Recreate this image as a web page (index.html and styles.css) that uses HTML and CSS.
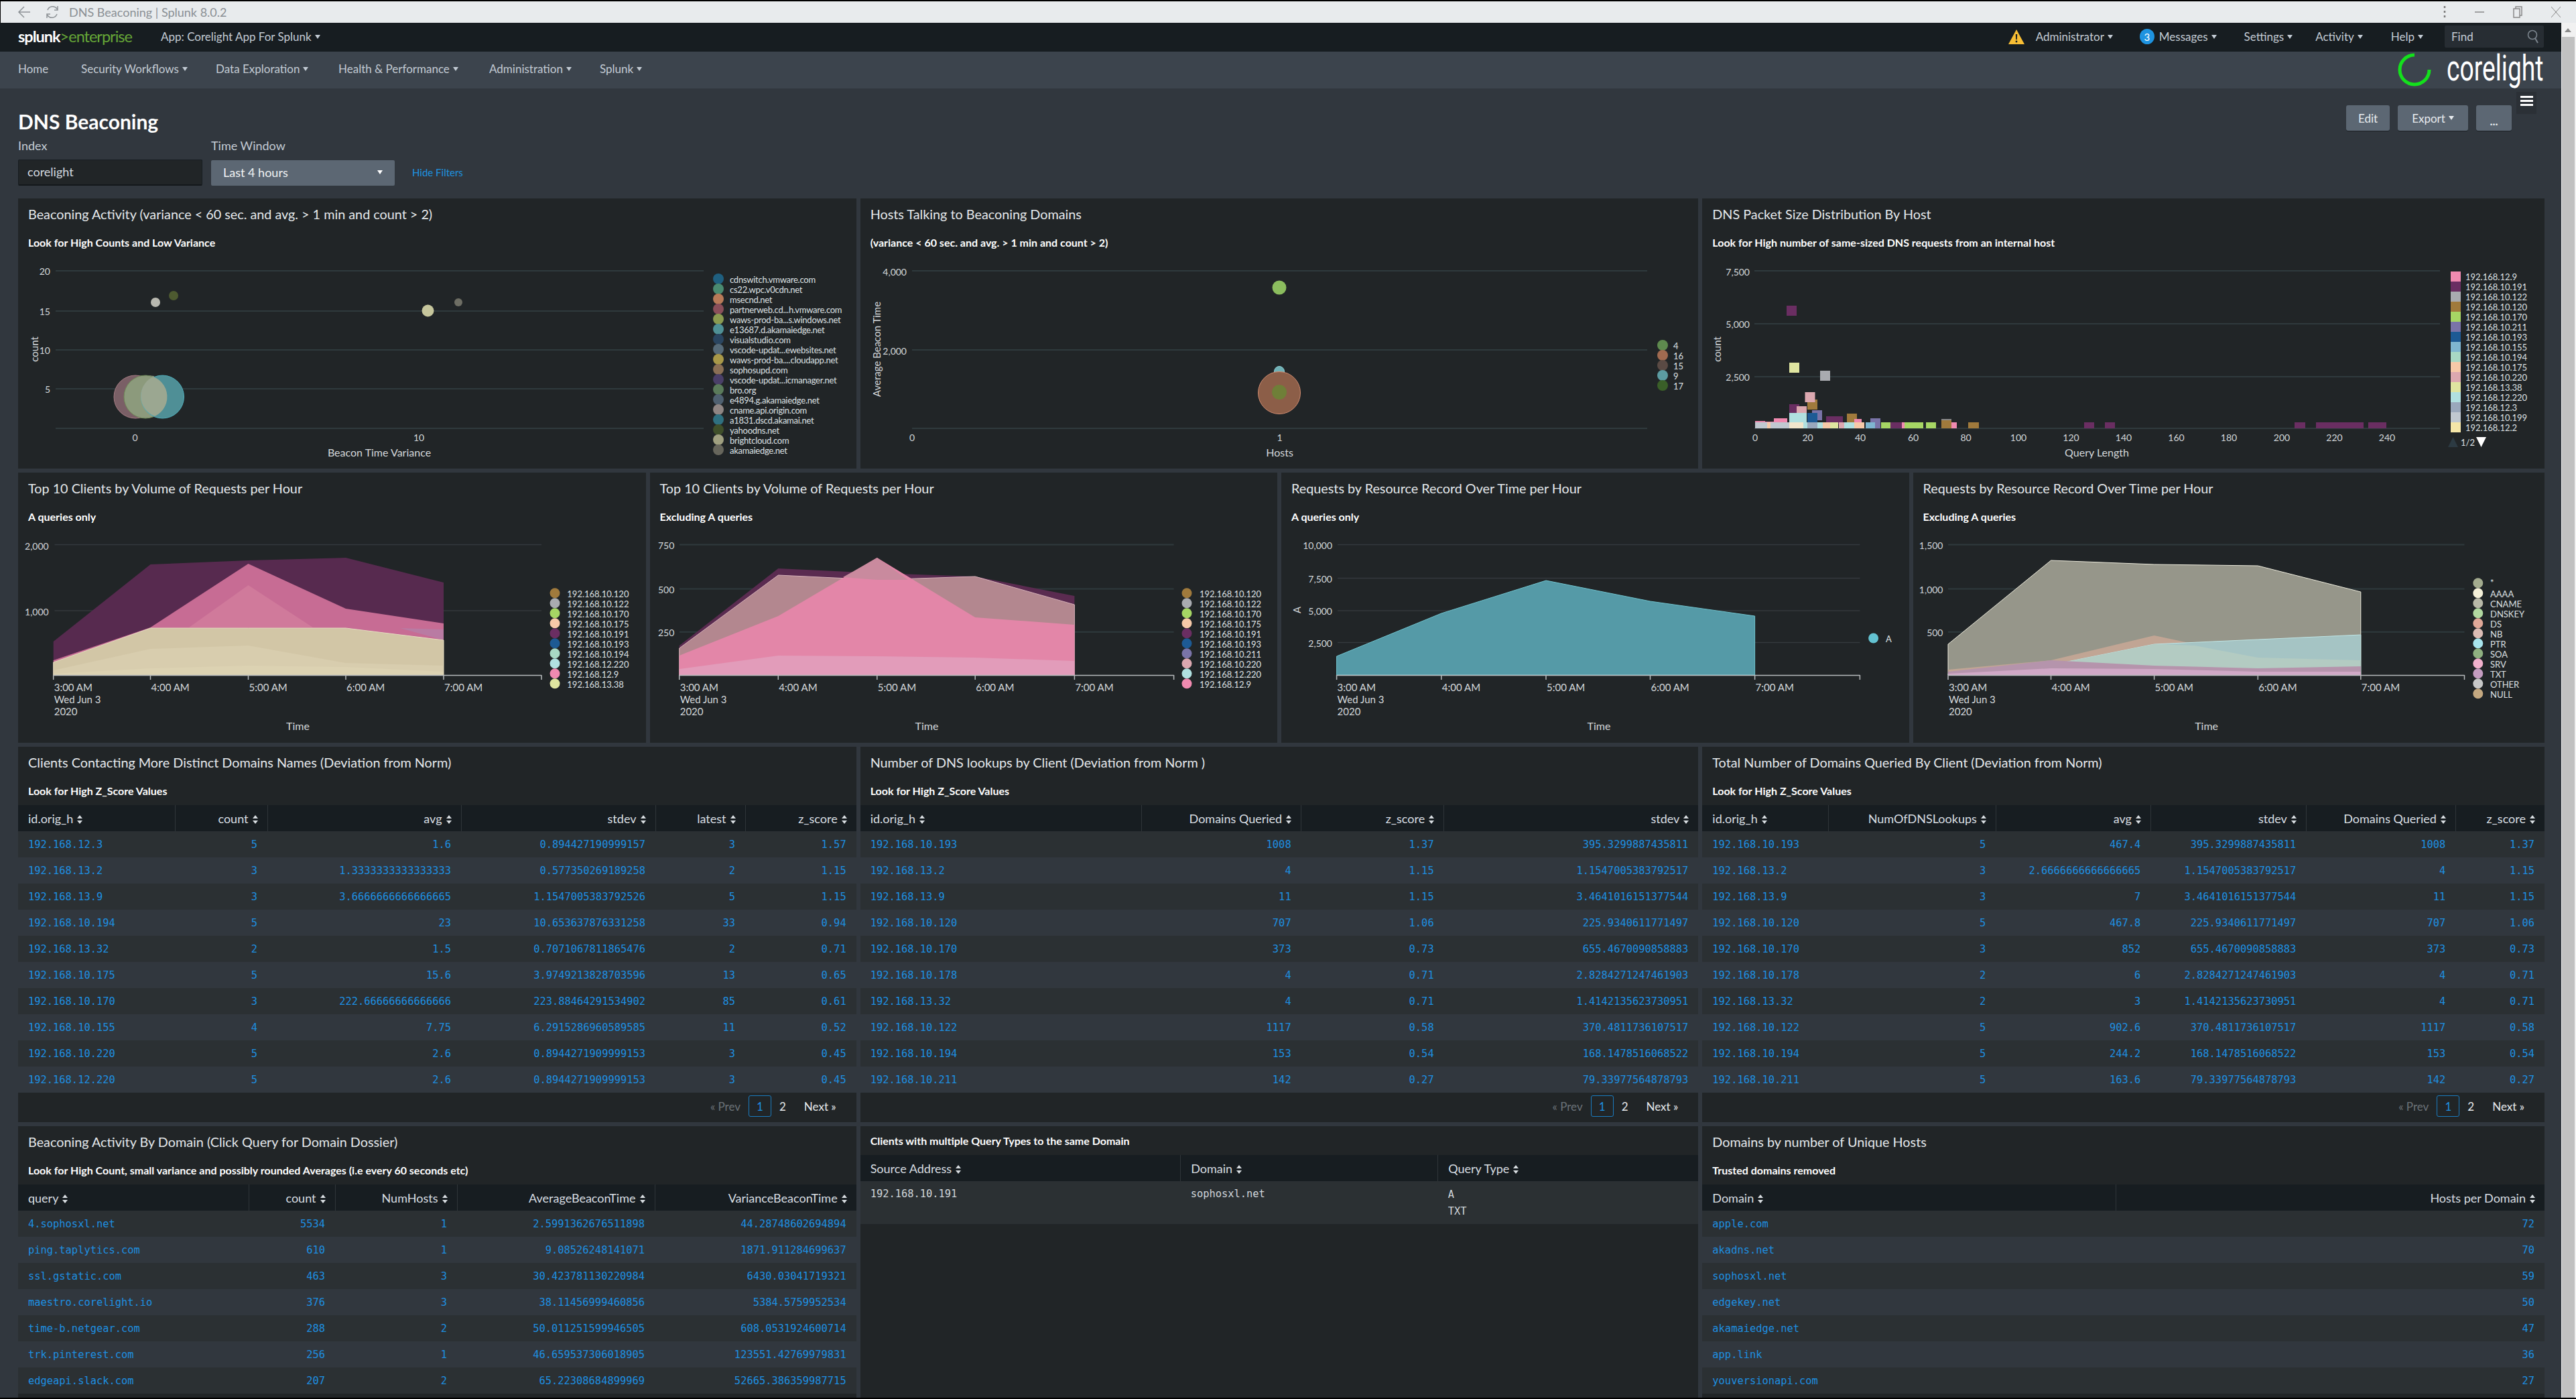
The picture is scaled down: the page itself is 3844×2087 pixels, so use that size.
FILE: index.html
```html
<!DOCTYPE html>
<html lang="en">
<head>
<meta charset="utf-8">
<title>DNS Beaconing | Splunk 8.0.2</title>
<link rel="stylesheet" href="styles.css">
</head>
<body>
<div class="chrome">
  <svg class="chrome-ic" width="24" height="24" viewBox="0 0 24 24"><path d="M20 12H4M11 4l-8 8 8 8" fill="none" stroke="#8d9296" stroke-width="1.5"/></svg>
  <svg class="chrome-ic" width="24" height="24" viewBox="0 0 24 24"><path d="M5 9a8 8 0 0 1 14-2l1 2M19 15a8 8 0 0 1-14 2l-1-2M20 3v6h-5M4 21v-6h5" fill="none" stroke="#8d9296" stroke-width="1.5"/></svg>
  <span class="chrome-title">DNS Beaconing | Splunk 8.0.2</span>
  <div class="chrome-right">
    <svg width="4" height="18" viewBox="0 0 4 18"><path d="M2 0v3M2 7v3M2 14v3" stroke="#777" stroke-width="2.5"/></svg>
    <svg width="14" height="14" viewBox="0 0 14 14"><path d="M0 7h14" stroke="#888" stroke-width="1.5"/></svg>
    <svg width="14" height="18" viewBox="0 0 14 18"><path d="M1 4h9v13H1zM4 4V1h9v13h-3" fill="none" stroke="#888" stroke-width="1.5"/></svg>
    <svg width="14" height="18" viewBox="0 0 14 18"><path d="M0 1l14 16M14 1L0 17" fill="none" stroke="#888" stroke-width="1"/></svg>
  </div>
</div>
<div class="shell">
<div class="main">
  <header class="topbar">
    <div class="brand"><span class="brand-a">splunk</span><span class="brand-b">&gt;enterprise</span></div>
    <span class="top-item caret app-menu">App: Corelight App For Splunk</span>
    <div class="top-right">
      <svg class="warn" width="24" height="22" viewBox="0 0 24 22"><path d="M12 0l12 22H0z" fill="#f8be34"/><path d="M10.800 7h2.400l-.4 8h-1.600z" fill="#171d21"/><circle cx="12" cy="18" r="1.400" fill="#171d21"/></svg>
      <span class="top-item caret admin">Administrator</span>
      <span class="badge">3</span>
      <span class="top-item caret msgs">Messages</span>
      <span class="top-item caret settings">Settings</span>
      <span class="top-item caret activity">Activity</span>
      <span class="top-item caret help">Help</span>
      <div class="find"><span>Find</span>
        <svg width="18" height="22" viewBox="0 0 18 22"><circle cx="8" cy="8" r="6.500" fill="none" stroke="#7b848d" stroke-width="1.600"/><path d="M12 13l4 7" stroke="#7b848d" stroke-width="2"/></svg>
      </div>
    </div>
  </header>
  <nav class="appbar">
    <span class="nav-item home">Home</span>
    <span class="nav-item caret sec">Security Workflows</span>
    <span class="nav-item caret data">Data Exploration</span>
    <span class="nav-item caret perf">Health &amp; Performance</span>
    <span class="nav-item caret adm">Administration</span>
    <span class="nav-item caret spl">Splunk</span>
    <svg class="logo" width="218" height="60" viewBox="0 0 218 60">
      <path d="M25 5A22 22 0 1 0 47 27" fill="none" stroke="#14e01c" stroke-width="5"/>
      <text class="logo-text" transform="translate(73 43) scale(.69 1)">corelight</text>
    </svg>
  </nav>
  <div class="pagehead">
    <div class="pagehead-left">
      <h1>DNS Beaconing</h1>
      <div class="filters">
        <div class="field"><label>Index</label><div class="input">corelight</div></div>
        <div class="field"><label>Time Window</label><div class="select"><span>Last 4 hours</span><i class="tri"></i></div></div>
        <a class="hide">Hide Filters</a>
      </div>
    </div>
    <div class="btns">
      <span class="btn edit">Edit</span>
      <span class="btn export caret">Export</span>
      <span class="btn more">...</span>
    </div>
    <div class="burger"><i></i><i></i><i></i></div>
  </div>

  <div class="row r3 h403">
    <section class="panel">
      <h2>Beaconing Activity (variance &lt; 60 sec. and avg. &gt; 1 min and count &gt; 2)</h2>
      <h3>Look for High Counts and Low Variance</h3>
      <svg class="chart">
        <g class="grid"><path d="M56 22H1023M56 82H1023M56 140H1023M56 198H1023M56 257H1023"/></g>
        <g class="yl"><text x="48" y="22">20</text><text x="48" y="82">15</text><text x="48" y="140">10</text><text x="48" y="198">5</text></g>
        <g class="xl"><text x="174.500" y="270">0</text><text x="598" y="270">10</text><text x="539" y="292">Beacon Time Variance</text></g>
        <text class="rot" transform="translate(24 139) rotate(-90)">count</text>
        <circle cx="175" cy="210" r="32" fill="#7a5f66" stroke="#a87f85"/>
        <circle cx="190" cy="210" r="32" fill="#8c9a7c" stroke="#6f8a58"/>
        <circle cx="215.500" cy="210" r="32" fill="#4f8f96" stroke="#50b0bd"/>
        <path d="M190 178a32 32 0 0 1 14 61a32 32 0 0 1 0-60" fill="#9ba791"/>
        <circle cx="205" cy="69" r="7" fill="#b9b9b0"/>
        <circle cx="232" cy="59" r="7" fill="#4d5a30"/>
        <circle cx="611.500" cy="81.500" r="9" fill="#c6c69c"/>
        <circle cx="657" cy="69" r="6" fill="#6e6e64"/>
        <g class="lg tight">
          <circle cx="1045" cy="34" r="8" fill="#1f5f7f"/><text x="1062" y="35">cdnswitch.vmware.com</text>
          <circle cx="1045" cy="49" r="8" fill="#4a8a70"/><text x="1062" y="50">cs22.wpc.v0cdn.net</text>
          <circle cx="1045" cy="64" r="8" fill="#b87a58"/><text x="1062" y="65">msecnd.net</text>
          <circle cx="1045" cy="79" r="8" fill="#8a4f5a"/><text x="1062" y="80">partnerweb.cd...h.vmware.com</text>
          <circle cx="1045" cy="94" r="8" fill="#8a9a50"/><text x="1062" y="95">waws-prod-ba...s.windows.net</text>
          <circle cx="1045" cy="109" r="8" fill="#4f9095"/><text x="1062" y="110">e13687.d.akamaiedge.net</text>
          <circle cx="1045" cy="124" r="8" fill="#2a4560"/><text x="1062" y="125">visualstudio.com</text>
          <circle cx="1045" cy="139" r="8" fill="#566a78"/><text x="1062" y="140">vscode-updat...ewebsites.net</text>
          <circle cx="1045" cy="154" r="8" fill="#a89848"/><text x="1062" y="155">waws-prod-ba....cloudapp.net</text>
          <circle cx="1045" cy="169" r="8" fill="#8a6f55"/><text x="1062" y="170">sophosupd.com</text>
          <circle cx="1045" cy="184" r="8" fill="#4a3f68"/><text x="1062" y="185">vscode-updat...icmanager.net</text>
          <circle cx="1045" cy="199" r="8" fill="#5a7a5a"/><text x="1062" y="200">bro.org</text>
          <circle cx="1045" cy="214" r="8" fill="#4f6070"/><text x="1062" y="215">e4894.g.akamaiedge.net</text>
          <circle cx="1045" cy="229" r="8" fill="#8f8583"/><text x="1062" y="230">cname.api.origin.com</text>
          <circle cx="1045" cy="244" r="8" fill="#2f7080"/><text x="1062" y="245">a1831.dscd.akamai.net</text>
          <circle cx="1045" cy="259" r="8" fill="#3f4f2a"/><text x="1062" y="260">yahoodns.net</text>
          <circle cx="1045" cy="274" r="8" fill="#a0a080"/><text x="1062" y="275">brightcloud.com</text>
          <circle cx="1045" cy="289" r="8" fill="#67665c"/><text x="1062" y="290">akamaiedge.net</text>
        </g>
      </svg>
    </section>
    <section class="panel">
      <h2>Hosts Talking to Beaconing Domains</h2>
      <h3>(variance &lt; 60 sec. and avg. &gt; 1 min and count &gt; 2)</h3>
      <svg class="chart">
        <g class="grid"><path d="M77 22H1174M77 140H1174M77 257H1174"/></g>
        <g class="yl"><text x="69" y="23">4,000</text><text x="69" y="141">2,000</text></g>
        <g class="xl"><text x="77" y="270">0</text><text x="625.500" y="270">1</text><text x="625.500" y="292">Hosts</text></g>
        <text class="rot" transform="translate(23.500 139) rotate(-90)">Average Beacon Time</text>
        <circle cx="625" cy="47" r="10.500" fill="#8bbd5e"/>
        <circle cx="625" cy="172" r="7.500" fill="#6fb0b5" stroke="#8fd0d5"/>
        <circle cx="625" cy="204" r="31.500" fill="#8c5e48" stroke="#cf8b70"/>
        <circle cx="625" cy="203" r="11" fill="#6f7f38"/>
        <g class="lg">
          <circle cx="1197" cy="133" r="8" fill="#5e8a4e"/><text x="1213" y="134">4</text>
          <circle cx="1197" cy="148" r="8" fill="#a06a50"/><text x="1213" y="149">16</text>
          <circle cx="1197" cy="163" r="8" fill="#5a4a44"/><text x="1213" y="164">15</text>
          <circle cx="1197" cy="178" r="8" fill="#5c9ca2"/><text x="1213" y="179">9</text>
          <circle cx="1197" cy="193" r="8" fill="#3a5f28"/><text x="1213" y="194">17</text>
        </g>
      </svg>
    </section>
    <section class="panel">
      <h2>DNS Packet Size Distribution By Host</h2>
      <h3>Look for High number of same-sized DNS requests from an internal host</h3>
      <svg class="chart">
        <g class="grid"><path d="M78 22H1101M78 101H1101M78 180H1101M78 257H1101"/></g>
        <g class="yl"><text x="71" y="23">7,500</text><text x="71" y="101">5,000</text><text x="71" y="180">2,500</text></g>
        <g class="xl">
          <text x="79" y="270">0</text><text x="157.500" y="270">20</text><text x="236" y="270">40</text><text x="315" y="270">60</text><text x="393.500" y="270">80</text><text x="472" y="270">100</text><text x="550.500" y="270">120</text><text x="629" y="270">140</text><text x="707.500" y="270">160</text><text x="786" y="270">180</text><text x="865" y="270">200</text><text x="943.500" y="270">220</text><text x="1022" y="270">240</text>
          <text x="589" y="292">Query Length</text>
        </g>
        <text class="rot" transform="translate(22 139) rotate(-90)">count</text>
        <rect x="126" y="74" width="15" height="15" fill="#6a2e62"/>
        <rect x="130" y="159" width="15" height="15" fill="#dfe5a0"/>
        <rect x="176" y="171" width="15" height="15" fill="#a9abb0"/>
        <rect x="157" y="214" width="15" height="15" fill="#a07a3c"/>
        <rect x="153.500" y="203" width="15" height="15" fill="#dca8b0"/>
        <rect x="130" y="221" width="15" height="15" fill="#6a2e62"/>
        <rect x="141" y="224" width="15" height="15" fill="#dca8b0"/>
        <rect x="164" y="230" width="15" height="15" fill="#7a74a8"/>
        <rect x="157" y="234" width="15" height="15" fill="#1d5a94"/>
        <rect x="130" y="234" width="26" height="21" fill="#b0e0e0"/>
        <rect x="216" y="235" width="15" height="15" fill="#a07a3c"/>
        <rect x="185" y="239" width="25" height="12" fill="#6a2e62"/>
        <rect x="251" y="242" width="15" height="15" fill="#7a74a8"/>
        <rect x="79" y="246" width="15" height="11" fill="#f08ab0"/>
        <rect x="107" y="242" width="20" height="15" fill="#f08ab0"/>
        <rect x="88" y="247" width="19" height="10" fill="#f08ab0"/>
        <rect x="227" y="243" width="11" height="14" fill="#f08ab0"/>
        <rect x="357" y="243" width="15" height="3" fill="#8a8a8a"/>
        <rect x="357" y="245" width="15" height="12" fill="#a07a3c"/>
        <rect x="79" y="248" width="18" height="9" fill="#c0c8d0"/>
        <rect x="97" y="248" width="5" height="9" fill="#f6c9a8"/>
        <rect x="102" y="248" width="28" height="9" fill="#c0c8d0"/>
        <rect x="130" y="248" width="21" height="9" fill="#f1e5cc"/>
        <rect x="151" y="248" width="6" height="9" fill="#b0e0e0"/>
        <rect x="157" y="248" width="15" height="9" fill="#9aa8bc"/>
        <rect x="172" y="248" width="8" height="9" fill="#b0e0e0"/>
        <rect x="180" y="248" width="11" height="9" fill="#f6c9a8"/>
        <rect x="191" y="248" width="12" height="9" fill="#dfe5a0"/>
        <rect x="204" y="248" width="8" height="9" fill="#dca8b0"/>
        <rect x="212" y="248" width="15" height="9" fill="#b0e0e0"/>
        <rect x="227" y="248" width="15" height="9" fill="#f6c9a8"/>
        <rect x="244" y="248" width="14" height="9" fill="#7fb6d0"/>
        <rect x="258" y="248" width="8" height="9" fill="#7a74a8"/>
        <rect x="267" y="248" width="14" height="9" fill="#a6d664"/>
        <rect x="281" y="248" width="17" height="9" fill="#6a2e62"/>
        <rect x="298" y="248" width="4" height="9" fill="#f08ab0"/>
        <rect x="302" y="248" width="28" height="9" fill="#a6d664"/>
        <rect x="334" y="248" width="15" height="9" fill="#a6d664"/>
        <rect x="372" y="248" width="8" height="9" fill="#f08ab0"/>
        <rect x="397" y="248" width="16" height="9" fill="#a07a3c"/>
        <rect x="570" y="248" width="15" height="9" fill="#6a2e62"/>
        <rect x="601" y="248" width="15" height="9" fill="#6a2e62"/>
        <rect x="884" y="248" width="16" height="9" fill="#6a2e62"/>
        <rect x="916" y="248" width="46" height="9" fill="#6a2e62"/>
        <rect x="962" y="248" width="25" height="9" fill="#6a2e62"/>
        <rect x="994" y="248" width="27" height="9" fill="#6a2e62"/>
        <g class="lg">
          <rect x="1117" y="23" width="15" height="15" fill="#f08ab0"/><text x="1139" y="31">192.168.12.9</text>
          <rect x="1117" y="38" width="15" height="15" fill="#6a2e62"/><text x="1139" y="46">192.168.10.191</text>
          <rect x="1117" y="53" width="15" height="15" fill="#a9abb0"/><text x="1139" y="61">192.168.10.122</text>
          <rect x="1117" y="68" width="15" height="15" fill="#a07a3c"/><text x="1139" y="76">192.168.10.120</text>
          <rect x="1117" y="83" width="15" height="15" fill="#a6d664"/><text x="1139" y="91">192.168.10.170</text>
          <rect x="1117" y="98" width="15" height="15" fill="#7a74a8"/><text x="1139" y="106">192.168.10.211</text>
          <rect x="1117" y="113" width="15" height="15" fill="#1d5a94"/><text x="1139" y="121">192.168.10.193</text>
          <rect x="1117" y="128" width="15" height="15" fill="#7fb6d0"/><text x="1139" y="136">192.168.10.155</text>
          <rect x="1117" y="143" width="15" height="15" fill="#a8d8c4"/><text x="1139" y="151">192.168.10.194</text>
          <rect x="1117" y="158" width="15" height="15" fill="#f6c9a8"/><text x="1139" y="166">192.168.10.175</text>
          <rect x="1117" y="173" width="15" height="15" fill="#dca8b0"/><text x="1139" y="181">192.168.10.220</text>
          <rect x="1117" y="188" width="15" height="15" fill="#dfe5a0"/><text x="1139" y="196">192.168.13.38</text>
          <rect x="1117" y="203" width="15" height="15" fill="#b0e0e0"/><text x="1139" y="211">192.168.12.220</text>
          <rect x="1117" y="218" width="15" height="15" fill="#9aa8bc"/><text x="1139" y="226">192.168.12.3</text>
          <rect x="1117" y="233" width="15" height="15" fill="#c0c8d0"/><text x="1139" y="241">192.168.10.199</text>
          <rect x="1117" y="248" width="15" height="15" fill="#f5e6a8"/><text x="1139" y="256">192.168.12.2</text>
          <path d="M1113 285l7.500-15 7.500 15z" fill="#2c3a42"/><text x="1132" y="278">1/2</text><path d="M1155 270h15l-7.500 15z" fill="#fff"/>
        </g>
      </svg>
    </section>
  </div>

  <div class="row r4 h403">
    <section class="panel">
      <h2>Top 10 Clients by Volume of Requests per Hour</h2>
      <h3>A queries only</h3>
      <svg class="chart">
        <g class="grid thin"><path d="M54.500 21.500H781M54.500 120H781"/></g>
        <g class="yl"><text x="45.700" y="23">2,000</text><text x="45.700" y="121">1,000</text></g>
        <polygon points="52.700,166 197.500,51 343.500,45 489,41 635,78 635,216 52.700,216" fill="#572a4f"/>
        <polygon points="52.700,194 197.500,145 343.500,50 489,117 635,139 635,216 52.700,216" fill="#c76c94"/>
        <polygon points="255,145 343.500,82 440,145" fill="#d07a9b"/>
        <polygon points="570,146 635,148 635,164" fill="#b97ba3"/>
        <polygon points="52.700,197 197.500,146 343.500,146 489,146 635,164 635,216 52.700,216" fill="#d2c6a6" stroke="#e4dcc0"/>
        <polygon points="52.700,209 197.500,177 343.500,172 489,198 635,202 635,216 52.700,216" fill="#d8cdae"/>
        <polygon points="52.700,214 197.500,206 343.500,202 489,204 635,211 635,216 52.700,216" fill="#dcd2b2"/>
        <path class="axis" d="M52.700 216.500H781M52.700 216V223M197.500 216V223M343.500 216V223M489 216V223M635 216V223M781 216V223"/>
        <g class="xls">
          <text x="53.700" y="234">3:00 AM</text><text x="198.500" y="234">4:00 AM</text><text x="344.500" y="234">5:00 AM</text><text x="490" y="234">6:00 AM</text><text x="636" y="234">7:00 AM</text>
          <text x="53.700" y="252">Wed Jun 3</text><text x="53.700" y="270">2020</text>
        </g>
        <g class="xl"><text x="417.500" y="291">Time</text></g>
        <g class="lg">
          <circle cx="801" cy="93.700" r="7.500" fill="#a07a3c"/><text x="819.300" y="95">192.168.10.120</text>
          <circle cx="801" cy="108.700" r="7.500" fill="#a9abb0"/><text x="819.300" y="110">192.168.10.122</text>
          <circle cx="801" cy="123.700" r="7.500" fill="#a6d664"/><text x="819.300" y="125">192.168.10.170</text>
          <circle cx="801" cy="138.700" r="7.500" fill="#f6c9a8"/><text x="819.300" y="140">192.168.10.175</text>
          <circle cx="801" cy="153.700" r="7.500" fill="#6a2e62"/><text x="819.300" y="155">192.168.10.191</text>
          <circle cx="801" cy="168.700" r="7.500" fill="#1d5a94"/><text x="819.300" y="170">192.168.10.193</text>
          <circle cx="801" cy="183.700" r="7.500" fill="#a8d8c4"/><text x="819.300" y="185">192.168.10.194</text>
          <circle cx="801" cy="198.700" r="7.500" fill="#b0e0e0"/><text x="819.300" y="200">192.168.12.220</text>
          <circle cx="801" cy="213.700" r="7.500" fill="#f08ab0"/><text x="819.300" y="215">192.168.12.9</text>
          <circle cx="801" cy="228.700" r="7.500" fill="#dfe5a0"/><text x="819.300" y="230">192.168.13.38</text>
        </g>
      </svg>
    </section>
    <section class="panel">
      <h2>Top 10 Clients by Volume of Requests per Hour</h2>
      <h3>Excluding A queries</h3>
      <svg class="chart">
        <g class="grid"><path d="M44 21.500H781.600M44 87.500H781.600M44 151.700H781.600"/></g>
        <g class="yl"><text x="36.300" y="22.500">750</text><text x="36.300" y="88">500</text><text x="36.300" y="152">250</text></g>
        <polygon points="43.700,172 191.300,57 338.800,64 485.200,69 633.400,98 633.400,216 43.700,216" fill="#5a2b50"/>
        <polygon points="43.700,176 191.300,67 338.800,74 485.200,69 633.400,111 633.400,216 43.700,216" fill="#b3878f" stroke="#d5b0b8"/>
        <polygon points="43.700,187 191.300,128 338.800,41 485.200,130 633.400,141 633.400,216 43.700,216" fill="#e386a8"/>
        <polygon points="288,70 338.800,41 385,74 338.800,74" fill="#c98a9e"/>
        <polygon points="43.700,207 191.300,187 338.800,188 485.200,190 633.400,195 633.400,216 43.700,216" fill="#e29cba"/>
        <path class="axis" d="M43.700 216.500H781.600M43.700 216V223M191.300 216V223M338.800 216V223M485.200 216V223M633.400 216V223M781.600 216V223"/>
        <g class="xls">
          <text x="44.700" y="234">3:00 AM</text><text x="192.300" y="234">4:00 AM</text><text x="339.800" y="234">5:00 AM</text><text x="486.200" y="234">6:00 AM</text><text x="634.400" y="234">7:00 AM</text>
          <text x="44.700" y="252">Wed Jun 3</text><text x="44.700" y="270">2020</text>
        </g>
        <g class="xl"><text x="413" y="291">Time</text></g>
        <g class="lg">
          <circle cx="801" cy="93.700" r="7.500" fill="#a07a3c"/><text x="820" y="95">192.168.10.120</text>
          <circle cx="801" cy="108.700" r="7.500" fill="#a9abb0"/><text x="820" y="110">192.168.10.122</text>
          <circle cx="801" cy="123.700" r="7.500" fill="#a6d664"/><text x="820" y="125">192.168.10.170</text>
          <circle cx="801" cy="138.700" r="7.500" fill="#f6c9a8"/><text x="820" y="140">192.168.10.175</text>
          <circle cx="801" cy="153.700" r="7.500" fill="#6a2e62"/><text x="820" y="155">192.168.10.191</text>
          <circle cx="801" cy="168.700" r="7.500" fill="#1d5a94"/><text x="820" y="170">192.168.10.193</text>
          <circle cx="801" cy="183.700" r="7.500" fill="#7a74a8"/><text x="820" y="185">192.168.10.211</text>
          <circle cx="801" cy="198.700" r="7.500" fill="#dca8b0"/><text x="820" y="200">192.168.10.220</text>
          <circle cx="801" cy="213.700" r="7.500" fill="#b0e0e0"/><text x="820" y="215">192.168.12.220</text>
          <circle cx="801" cy="228.700" r="7.500" fill="#f08ab0"/><text x="820" y="230">192.168.12.9</text>
        </g>
      </svg>
    </section>
    <section class="panel">
      <h2>Requests by Resource Record Over Time per Hour</h2>
      <h3>A queries only</h3>
      <svg class="chart">
        <g class="grid thin"><path d="M84 21.500H863.400M84 71.500H863.400M84 120H863.400M84 167.500H863.400"/></g>
        <g class="yl"><text x="76" y="22.500">10,000</text><text x="76" y="72">7,500</text><text x="76" y="120.500">5,000</text><text x="76" y="168">2,500</text></g>
        <text class="rot" transform="translate(22.600 119) rotate(-90)">A</text>
        <polygon points="82.600,188 238.800,124 395,75 550.500,106 706.600,128 706.600,216 82.600,216" fill="#559aa7" stroke="#70c4cf"/>
        <path class="axis" d="M82.600 216.500H863.400M82.600 216V223M238.800 216V223M395 216V223M550.500 216V223M706.600 216V223M863.400 216V223"/>
        <g class="xls">
          <text x="83.600" y="234">3:00 AM</text><text x="239.800" y="234">4:00 AM</text><text x="396" y="234">5:00 AM</text><text x="551.500" y="234">6:00 AM</text><text x="707.600" y="234">7:00 AM</text>
          <text x="83.600" y="252">Wed Jun 3</text><text x="83.600" y="270">2020</text>
        </g>
        <g class="xl"><text x="474" y="291">Time</text></g>
        <g class="lg"><circle cx="883.600" cy="161" r="7.500" fill="#63c2d1"/><text x="902" y="162">A</text></g>
      </svg>
    </section>
    <section class="panel">
      <h2>Requests by Resource Record Over Time per Hour</h2>
      <h3>Excluding A queries</h3>
      <svg class="chart">
        <g class="grid"><path d="M52 21.500H822.500M52 87.500H822.500M52 151.700H822.500"/></g>
        <g class="yl"><text x="44.500" y="22.500">1,500</text><text x="44.500" y="88">1,000</text><text x="44.500" y="152">500</text></g>
        <polygon points="52,170 205.500,45 359.600,51 514.300,53 667.800,92 667.800,216 52,216" fill="#96968a" stroke="#eceadb"/>
        <polygon points="52,208 205.500,194 359.600,157 514.300,190 667.800,194 667.800,216 52,216" fill="#c1a594"/>
        <polygon points="52,214 205.500,201 359.600,170 514.300,163 667.800,156 667.800,216 52,216" fill="#a5c4c4" stroke="#bfe4e4"/>
        <polygon points="52,214 205.500,201 359.600,170 420,172 514.300,190 667.800,194 667.800,216 52,216" fill="#b3cbc2"/>
        <polygon points="52,211 205.500,194 359.600,202 514.300,206 667.800,203 667.800,216 52,216" fill="#b594ac"/>
        <polygon points="52,214 205.500,206 359.600,207 514.300,211 667.800,211 667.800,216 52,216" fill="#d0a8c6"/>
        <path class="axis" d="M52 216.500H822.500M52 216V223M205.500 216V223M359.600 216V223M514.300 216V223M667.800 216V223M822.500 216V223"/>
        <g class="xls">
          <text x="53" y="234">3:00 AM</text><text x="206.500" y="234">4:00 AM</text><text x="360.600" y="234">5:00 AM</text><text x="515.300" y="234">6:00 AM</text><text x="668.800" y="234">7:00 AM</text>
          <text x="53" y="252">Wed Jun 3</text><text x="53" y="270">2020</text>
        </g>
        <g class="xl"><text x="437.600" y="291">Time</text></g>
        <g class="lg">
          <circle cx="842.800" cy="78.700" r="7.500" fill="#a3ab8e"/><text x="861" y="78">*</text>
          <circle cx="842.800" cy="93.700" r="7.500" fill="#f4f0d8"/><text x="861" y="95">AAAA</text>
          <circle cx="842.800" cy="108.700" r="7.500" fill="#b9b9a8"/><text x="861" y="110">CNAME</text>
          <circle cx="842.800" cy="123.700" r="7.500" fill="#b2d8a0"/><text x="861" y="125">DNSKEY</text>
          <circle cx="842.800" cy="138.700" r="7.500" fill="#e0a898"/><text x="861" y="140">DS</text>
          <circle cx="842.800" cy="153.700" r="7.500" fill="#dcbcb4"/><text x="861" y="155">NB</text>
          <circle cx="842.800" cy="168.700" r="7.500" fill="#a8e4ec"/><text x="861" y="170">PTR</text>
          <circle cx="842.800" cy="183.700" r="7.500" fill="#8fb080"/><text x="861" y="185">SOA</text>
          <circle cx="842.800" cy="198.700" r="7.500" fill="#f0b0cc"/><text x="861" y="200">SRV</text>
          <circle cx="842.800" cy="213.700" r="7.500" fill="#c49cc0"/><text x="861" y="215">TXT</text>
          <circle cx="842.800" cy="228.700" r="7.500" fill="#c8c8c8"/><text x="861" y="230">OTHER</text>
          <circle cx="842.800" cy="243.700" r="7.500" fill="#c4a880"/><text x="861" y="245">NULL</text>
        </g>
      </svg>
    </section>
  </div>

  <div class="row r3 h560">
    <section class="panel">
      <h2>Clients Contacting More Distinct Domains Names (Deviation from Norm)</h2>
      <h3 class="tsub">Look for High Z_Score Values</h3>
      <table class="tbl t1">
        <colgroup><col><col><col><col><col><col></colgroup>
        <thead><tr><th>id.orig_h<i class="sort"></i></th><th class="n">count<i class="sort"></i></th><th class="n">avg<i class="sort"></i></th><th class="n">stdev<i class="sort"></i></th><th class="n">latest<i class="sort"></i></th><th class="n">z_score<i class="sort"></i></th></tr></thead>
        <tbody>
          <tr><td>192.168.12.3</td><td class="n">5</td><td class="n">1.6</td><td class="n">0.894427190999157</td><td class="n">3</td><td class="n">1.57</td></tr>
          <tr><td>192.168.13.2</td><td class="n">3</td><td class="n">1.3333333333333333</td><td class="n">0.577350269189258</td><td class="n">2</td><td class="n">1.15</td></tr>
          <tr><td>192.168.13.9</td><td class="n">3</td><td class="n">3.6666666666666665</td><td class="n">1.1547005383792526</td><td class="n">5</td><td class="n">1.15</td></tr>
          <tr><td>192.168.10.194</td><td class="n">5</td><td class="n">23</td><td class="n">10.653637876331258</td><td class="n">33</td><td class="n">0.94</td></tr>
          <tr><td>192.168.13.32</td><td class="n">2</td><td class="n">1.5</td><td class="n">0.7071067811865476</td><td class="n">2</td><td class="n">0.71</td></tr>
          <tr><td>192.168.10.175</td><td class="n">5</td><td class="n">15.6</td><td class="n">3.9749213828703596</td><td class="n">13</td><td class="n">0.65</td></tr>
          <tr><td>192.168.10.170</td><td class="n">3</td><td class="n">222.66666666666666</td><td class="n">223.88464291534902</td><td class="n">85</td><td class="n">0.61</td></tr>
          <tr><td>192.168.10.155</td><td class="n">4</td><td class="n">7.75</td><td class="n">6.2915286960589585</td><td class="n">11</td><td class="n">0.52</td></tr>
          <tr><td>192.168.10.220</td><td class="n">5</td><td class="n">2.6</td><td class="n">0.8944271909999153</td><td class="n">3</td><td class="n">0.45</td></tr>
          <tr><td>192.168.12.220</td><td class="n">5</td><td class="n">2.6</td><td class="n">0.8944271909999153</td><td class="n">3</td><td class="n">0.45</td></tr>
        </tbody>
      </table>
      <div class="pager"><span class="prev">« Prev</span><span class="cur">1</span><span>2</span><span class="next">Next »</span></div>
    </section>
    <section class="panel">
      <h2>Number of DNS lookups by Client (Deviation from Norm )</h2>
      <h3 class="tsub">Look for High Z_Score Values</h3>
      <table class="tbl t2">
        <colgroup><col><col><col><col></colgroup>
        <thead><tr><th>id.orig_h<i class="sort"></i></th><th class="n">Domains Queried<i class="sort"></i></th><th class="n">z_score<i class="sort"></i></th><th class="n">stdev<i class="sort"></i></th></tr></thead>
        <tbody>
          <tr><td>192.168.10.193</td><td class="n">1008</td><td class="n">1.37</td><td class="n">395.3299887435811</td></tr>
          <tr><td>192.168.13.2</td><td class="n">4</td><td class="n">1.15</td><td class="n">1.1547005383792517</td></tr>
          <tr><td>192.168.13.9</td><td class="n">11</td><td class="n">1.15</td><td class="n">3.4641016151377544</td></tr>
          <tr><td>192.168.10.120</td><td class="n">707</td><td class="n">1.06</td><td class="n">225.9340611771497</td></tr>
          <tr><td>192.168.10.170</td><td class="n">373</td><td class="n">0.73</td><td class="n">655.4670090858883</td></tr>
          <tr><td>192.168.10.178</td><td class="n">4</td><td class="n">0.71</td><td class="n">2.8284271247461903</td></tr>
          <tr><td>192.168.13.32</td><td class="n">4</td><td class="n">0.71</td><td class="n">1.4142135623730951</td></tr>
          <tr><td>192.168.10.122</td><td class="n">1117</td><td class="n">0.58</td><td class="n">370.4811736107517</td></tr>
          <tr><td>192.168.10.194</td><td class="n">153</td><td class="n">0.54</td><td class="n">168.1478516068522</td></tr>
          <tr><td>192.168.10.211</td><td class="n">142</td><td class="n">0.27</td><td class="n">79.33977564878793</td></tr>
        </tbody>
      </table>
      <div class="pager"><span class="prev">« Prev</span><span class="cur">1</span><span>2</span><span class="next">Next »</span></div>
    </section>
    <section class="panel">
      <h2>Total Number of Domains Queried By Client (Deviation from Norm)</h2>
      <h3 class="tsub">Look for High Z_Score Values</h3>
      <table class="tbl t3">
        <colgroup><col><col><col><col><col><col></colgroup>
        <thead><tr><th>id.orig_h<i class="sort"></i></th><th class="n">NumOfDNSLookups<i class="sort"></i></th><th class="n">avg<i class="sort"></i></th><th class="n">stdev<i class="sort"></i></th><th class="n">Domains Queried<i class="sort"></i></th><th class="n">z_score<i class="sort"></i></th></tr></thead>
        <tbody>
          <tr><td>192.168.10.193</td><td class="n">5</td><td class="n">467.4</td><td class="n">395.3299887435811</td><td class="n">1008</td><td class="n">1.37</td></tr>
          <tr><td>192.168.13.2</td><td class="n">3</td><td class="n">2.6666666666666665</td><td class="n">1.1547005383792517</td><td class="n">4</td><td class="n">1.15</td></tr>
          <tr><td>192.168.13.9</td><td class="n">3</td><td class="n">7</td><td class="n">3.4641016151377544</td><td class="n">11</td><td class="n">1.15</td></tr>
          <tr><td>192.168.10.120</td><td class="n">5</td><td class="n">467.8</td><td class="n">225.9340611771497</td><td class="n">707</td><td class="n">1.06</td></tr>
          <tr><td>192.168.10.170</td><td class="n">3</td><td class="n">852</td><td class="n">655.4670090858883</td><td class="n">373</td><td class="n">0.73</td></tr>
          <tr><td>192.168.10.178</td><td class="n">2</td><td class="n">6</td><td class="n">2.8284271247461903</td><td class="n">4</td><td class="n">0.71</td></tr>
          <tr><td>192.168.13.32</td><td class="n">2</td><td class="n">3</td><td class="n">1.4142135623730951</td><td class="n">4</td><td class="n">0.71</td></tr>
          <tr><td>192.168.10.122</td><td class="n">5</td><td class="n">902.6</td><td class="n">370.4811736107517</td><td class="n">1117</td><td class="n">0.58</td></tr>
          <tr><td>192.168.10.194</td><td class="n">5</td><td class="n">244.2</td><td class="n">168.1478516068522</td><td class="n">153</td><td class="n">0.54</td></tr>
          <tr><td>192.168.10.211</td><td class="n">5</td><td class="n">163.6</td><td class="n">79.33977564878793</td><td class="n">142</td><td class="n">0.27</td></tr>
        </tbody>
      </table>
      <div class="pager"><span class="prev">« Prev</span><span class="cur">1</span><span>2</span><span class="next">Next »</span></div>
    </section>
  </div>

  <div class="row r3 last-row">
    <section class="panel">
      <h2>Beaconing Activity By Domain (Click Query for Domain Dossier)</h2>
      <h3 class="tsub">Look for High Count, small variance and possibly rounded Averages (i.e every 60 seconds etc)</h3>
      <table class="tbl t4">
        <colgroup><col><col><col><col><col></colgroup>
        <thead><tr><th>query<i class="sort"></i></th><th class="n">count<i class="sort"></i></th><th class="n">NumHosts<i class="sort"></i></th><th class="n">AverageBeaconTime<i class="sort"></i></th><th class="n">VarianceBeaconTime<i class="sort"></i></th></tr></thead>
        <tbody>
          <tr><td>4.sophosxl.net</td><td class="n">5534</td><td class="n">1</td><td class="n">2.5991362676511898</td><td class="n">44.28748602694894</td></tr>
          <tr><td>ping.taplytics.com</td><td class="n">610</td><td class="n">1</td><td class="n">9.08526248141071</td><td class="n">1871.911284699637</td></tr>
          <tr><td>ssl.gstatic.com</td><td class="n">463</td><td class="n">3</td><td class="n">30.423781130220984</td><td class="n">6430.03041719321</td></tr>
          <tr><td>maestro.corelight.io</td><td class="n">376</td><td class="n">3</td><td class="n">38.11456999460856</td><td class="n">5384.5759952534</td></tr>
          <tr><td>time-b.netgear.com</td><td class="n">288</td><td class="n">2</td><td class="n">50.011251599946505</td><td class="n">608.0531924600714</td></tr>
          <tr><td>trk.pinterest.com</td><td class="n">256</td><td class="n">1</td><td class="n">46.659537306018905</td><td class="n">123551.42769979831</td></tr>
          <tr><td>edgeapi.slack.com</td><td class="n">207</td><td class="n">2</td><td class="n">65.22308684899969</td><td class="n">52665.386359987715</td></tr>
        </tbody>
      </table>
    </section>
    <section class="panel">
      <h3 class="solo">Clients with multiple Query Types to the same Domain</h3>
      <table class="tbl t5 plain">
        <colgroup><col><col><col></colgroup>
        <thead><tr><th>Source Address<i class="sort"></i></th><th>Domain<i class="sort"></i></th><th>Query Type<i class="sort"></i></th></tr></thead>
        <tbody>
          <tr><td>192.168.10.191</td><td>sophosxl.net</td><td><div class="mv">A</div><div class="mv">TXT</div></td></tr>
        </tbody>
      </table>
    </section>
    <section class="panel">
      <h2>Domains by number of Unique Hosts</h2>
      <h3 class="tsub">Trusted domains removed</h3>
      <table class="tbl t6">
        <colgroup><col><col></colgroup>
        <thead><tr><th>Domain<i class="sort"></i></th><th class="n">Hosts per Domain<i class="sort"></i></th></tr></thead>
        <tbody>
          <tr><td>apple.com</td><td class="n">72</td></tr>
          <tr><td>akadns.net</td><td class="n">70</td></tr>
          <tr><td>sophosxl.net</td><td class="n">59</td></tr>
          <tr><td>edgekey.net</td><td class="n">50</td></tr>
          <tr><td>akamaiedge.net</td><td class="n">47</td></tr>
          <tr><td>app.link</td><td class="n">36</td></tr>
          <tr><td>youversionapi.com</td><td class="n">27</td></tr>
        </tbody>
      </table>
    </section>
  </div>
</div>
<aside class="scrollbar"><i class="sb-up"></i><div class="sb-thumb"></div></aside>
</div>
</body>
</html>
```

FILE: styles.css
```css
* { box-sizing: border-box; }
html, body { margin: 0; padding: 0; }
body {
  width: 3844px; height: 2087px; overflow: hidden;
  display: flex; flex-direction: column;
  background: #000;
  border-top: 2px solid #000; border-bottom: 2px solid #000;
  font-family: "Lato", "Liberation Sans", sans-serif;
  color: #c3cbd4;
}
.chrome {
  height: 32px; flex: none; background: #e8ebed;
  display: flex; align-items: center; padding-left: 24px; gap: 17px;
  margin-left: 1px;
}
.chrome-title { font-size: 18px; color: #8a8f94; margin-left: -4px; }
.chrome-right { margin-left: auto; display: flex; align-items: center; gap: 43px; padding-right: 23px; }

.shell { flex: 1; display: flex; min-height: 0; }
.main { flex: 1; min-width: 0; display: flex; flex-direction: column; background: #31373e; overflow: hidden; }

.topbar { height: 43px; flex: none; background: #171d21; display: flex; align-items: center; padding: 0 0 2px 27px; }
.brand { font-size: 23.5px; line-height: 1; letter-spacing: -1px; width: 213px; white-space: nowrap; }
.brand-a { color: #fff; font-weight: 700; }
.brand-b { color: #65a637; }
.top-item { font-size: 17px; color: #c3cbd4; white-space: nowrap; }
.caret::after {
  content: ""; display: inline-block; margin-left: 5px; vertical-align: 3px;
  border-left: 4.5px solid transparent; border-right: 4.5px solid transparent; border-top: 6px solid currentColor;
}
.top-right { margin-left: auto; display: flex; align-items: center; padding-right: 26px; }
.warn { margin-right: 17px; }
.badge {
  width: 22px; height: 23px; border-radius: 50%; background: #1e93e0; color: #fff;
  font-size: 15px; display: flex; align-items: center; justify-content: center;
  margin-left: 40px; margin-right: 7px;
}
.settings { margin-left: 41px; }
.activity { margin-left: 34px; }
.help { margin-left: 42px; }
.find {
  width: 148px; height: 33px; margin-left: 32px; background: #272d33; border-radius: 2px;
  display: flex; align-items: center; justify-content: space-between; padding: 0 7px 0 10px;
  font-size: 17px; color: #c3cbd4;
}

.appbar { height: 55px; flex: none; background: #3c444d; display: flex; align-items: center; padding: 0 0 5px 27px; position: relative; }
.nav-item { font-size: 17px; color: #c3cbd4; white-space: nowrap; }
.home { width: 94px; }
.sec { width: 201px; }
.data { width: 183px; }
.perf { width: 225px; }
.adm { width: 165px; }
.logo { position: absolute; right: 26px; top: 0; overflow: visible; }
.logo-text { font-family: "Roboto", sans-serif; font-weight: 400; font-size: 54px; fill: #fff; }

.pagehead { height: 164px; flex: none; display: flex; position: relative; padding-left: 27px; padding-right: 74px; }
.pagehead-left { display: flex; flex-direction: column; }
h1 { margin: 32px 0 0; font-size: 30px; line-height: 34px; font-weight: 700; color: #fff; height: 34px; }
.filters { display: flex; margin-top: 7px; }
.field { display: flex; flex-direction: column; width: 275px; margin-right: 13px; }
.field label { font-size: 18px; line-height: 24px; height: 33px; color: #c3cbd4; }
.input {
  height: 39px; width: 275px; background: #212527; border: 1px solid #171d21; border-bottom: 2px solid #14181b; border-radius: 2px;
  font-size: 18px; line-height: 34px; padding-left: 13px; color: #d5dbe0;
}
.select {
  height: 38px; width: 274px; background: #5c6773; border-radius: 2px; margin-top: 1px;
  display: flex; align-items: center; justify-content: space-between; padding: 0 18px 2px;
  font-size: 18px; color: #f2f4f5;
}
.tri { border-left: 4.5px solid transparent; border-right: 4.5px solid transparent; border-top: 6px solid #fff; }
.hide { font-size: 15px; color: #1e93e0; align-self: flex-start; margin-top: 43px; margin-left: 12px; white-space: nowrap; }
.btns { margin-left: auto; display: flex; gap: 12px; padding-top: 25px; height: 63px; }
.btn {
  height: 38px; background: #5c6773; border-radius: 3px; color: #e8ecef; font-size: 17px;
  display: flex; align-items: center; justify-content: center; box-shadow: 0 1px 0 #1c2025;
}
.btn.caret::after { vertical-align: 0; }
.edit { width: 65px; }
.export { width: 105px; }
.more { width: 53px; padding-top: 8px; font-weight: 700; }
.burger {
  position: absolute; left: 3755px; top: 5px; width: 30px; height: 33px; background: #2b3036;
  display: flex; flex-direction: column; align-items: center; padding-top: 6px; gap: 3px;
}
.burger i { width: 19px; height: 3px; background: #fff; display: block; }

.row { display: grid; margin: 0 25px 6px 27px; flex: none; }
.r3 { grid-template-columns: repeat(3, 1fr); }
.r4 { grid-template-columns: repeat(4, 1fr); }
.h403 { height: 403px; }
.h560 { height: 560px; }
.last-row { flex: 1; margin-bottom: 0; min-height: 0; }
.panel { background: #212527; margin-right: 6px; min-width: 0; overflow: hidden; display: flex; flex-direction: column; }
.panel:last-child { margin-right: 0; }
.panel h2 { margin: 0; height: 46px; font-size: 19.8px; font-weight: 400; line-height: 46px; padding-left: 15px; color: #e4e8eb; white-space: nowrap; flex: none; }
.panel h3 { margin: 0; height: 40px; font-size: 16px; font-weight: 700; line-height: 40px; padding-left: 15px; color: #fff; white-space: nowrap; flex: none; }
.panel h3.tsub { height: 41px; line-height: 39px; }
.panel h3.solo { height: 43px; line-height: 43px; }

.chart { display: block; width: 100%; height: 317px; flex: none; font-family: "Lato", sans-serif; }
.grid path { stroke: #2f3a3d; stroke-width: 2; fill: none; }
.grid.thin path { stroke-width: 1.5; stroke: #34393d; }
.axis { stroke: #b7babc; stroke-width: 1.5; fill: none; }
.chart text { dominant-baseline: central; font-size: 14px; fill: #d3d7da; }
.yl text { text-anchor: end; }
.xl text { text-anchor: middle; }
.chart .xl text:last-child { font-size: 16px; }
.xls text { text-anchor: start; }
.chart .xls text { font-size: 15px; }
.chart .rot { text-anchor: middle; font-size: 15px; }
.chart .lg text { font-size: 13px; fill: #dde0e3; }
.chart .lg.tight text { letter-spacing: -0.25px; }

.tbl { width: 100%; border-collapse: collapse; table-layout: fixed; flex: none; }
.tbl th {
  height: 39px; background: #171d21; font-weight: 400; font-size: 18px; color: #d8dde1;
  text-align: left; padding: 0 13px 0 15px; border-left: 1px solid #2f3539; white-space: nowrap;
}
.tbl th:first-child { border-left: none; }
.tbl th.n, .tbl td.n { text-align: right; }
.tbl td {
  height: 39px; font-family: "DejaVu Sans Mono", "Liberation Mono", monospace; font-size: 15.4px;
  color: #1e8fe0; padding: 0 15px; white-space: nowrap;
}
.tbl tbody tr:nth-child(odd) { background: #2b3033; }
.tbl tbody tr:nth-child(even) { background: #31373e; }
.plain td { color: #d0d6db; vertical-align: top; padding-top: 10px; height: 64px; }
.mv { height: 25px; line-height: 20px; }
.plain th { height: 39px; }
.sort { display: inline-block; width: 9px; height: 13px; margin-left: 6px; vertical-align: -1px; position: relative; }
.sort::before, .sort::after { content: ""; position: absolute; left: 0; border-left: 4.5px solid transparent; border-right: 4.5px solid transparent; }
.sort::before { top: 0; border-bottom: 5.5px solid currentColor; }
.sort::after { bottom: 0; border-top: 5.5px solid currentColor; }

.t1 col:nth-child(1) { width: 234px; } .t1 col:nth-child(2) { width: 138px; } .t1 col:nth-child(3) { width: 289px; } .t1 col:nth-child(4) { width: 290px; } .t1 col:nth-child(5) { width: 134px; }
.t2 col:nth-child(1) { width: 420px; } .t2 col:nth-child(2) { width: 238px; } .t2 col:nth-child(3) { width: 213px; }
.t3 col:nth-child(1) { width: 188px; } .t3 col:nth-child(2) { width: 250px; } .t3 col:nth-child(3) { width: 231px; } .t3 col:nth-child(4) { width: 232px; } .t3 col:nth-child(5) { width: 223px; }
.t4 col:nth-child(1) { width: 344px; } .t4 col:nth-child(2) { width: 129px; } .t4 col:nth-child(3) { width: 182px; } .t4 col:nth-child(4) { width: 295px; }
.t5 col:nth-child(1) { width: 478px; } .t5 col:nth-child(2) { width: 384px; }
.t6 col:nth-child(1) { width: 617px; }

.pager { flex: 1; display: flex; justify-content: flex-end; align-items: center; gap: 12px; padding: 0 30px 4px 0; font-size: 17px; color: #e6e9ec; }
.prev { color: #6b7278; }
.next { margin-left: 15px; }
.cur { width: 34px; height: 32px; border: 1px solid #1a7bbf; border-radius: 3px; color: #1e8fe0; display: flex; align-items: center; justify-content: center; }

.scrollbar { width: 22px; flex: none; background: #f1f1f1; display: flex; flex-direction: column; align-items: flex-end; padding-right: 2px; position: relative; }
.sb-up { height: 21px; width: 20px; position: relative; flex: none; }
.sb-up::before { content: ""; position: absolute; left: 5px; top: 8px; border-left: 5px solid transparent; border-right: 5px solid transparent; border-bottom: 6px solid #8a8a8a; }
.sb-thumb { flex: 1; width: 19px; background: #c1c1c1; }
```
